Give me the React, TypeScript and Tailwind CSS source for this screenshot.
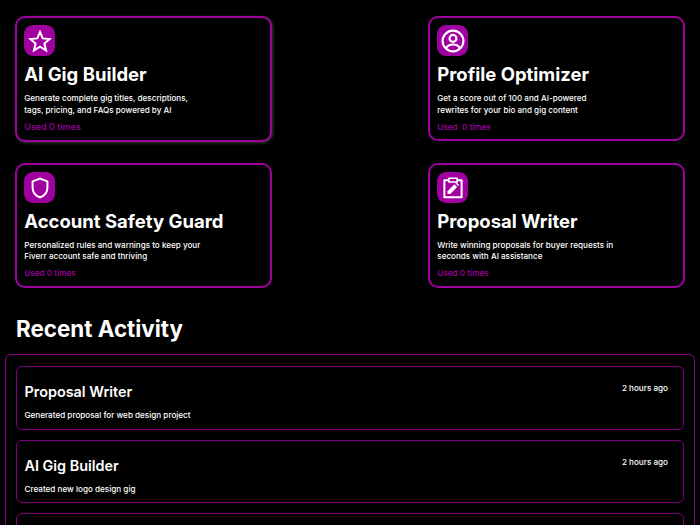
import type { ReactNode } from "react";

type Tool = {
  title: string;
  lines: string[];
  used: string;
  usedClass: string;
  descClass: string;
  icon: ReactNode;
  raised?: boolean;
};

const StarIcon = (
  <svg width="24" height="24" viewBox="0 0 24 24" fill="none" stroke="currentColor" strokeWidth="2" strokeLinejoin="miter">
    <polygon points="12,3 14.7,9.4 21.6,10 16.4,14.5 18,21.3 12,17.7 6,21.3 7.6,14.5 2.4,10 9.3,9.4" />
  </svg>
);

const ProfileIcon = (
  <svg width="26" height="26" viewBox="0 0 24 24" fill="none" stroke="currentColor" strokeWidth="2">
    <circle cx="12" cy="12" r="9.6" />
    <circle cx="12" cy="9.6" r="3.2" />
    <path d="M5.6 18.4c1.4-2.2 3.6-3.2 6.4-3.2s5 1 6.4 3.2" />
  </svg>
);

const ShieldIcon = (
  <svg width="24" height="24" viewBox="0 0 24 24" fill="none" stroke="currentColor" strokeWidth="2" strokeLinejoin="round">
    <path d="M12 2.6 4.6 5.4v6.1c0 4.7 3 8.3 7.4 9.9 4.4-1.6 7.4-5.2 7.4-9.9V5.4z" />
  </svg>
);

const ClipboardIcon = (
  <svg width="22" height="22" viewBox="0 0 24 24" fill="none" stroke="currentColor" strokeWidth="2.2" strokeLinejoin="round">
    <path d="M7.5 3.6H2.6v18.4h18.8V3.6h-4.9" />
    <rect x="7.5" y="1.4" width="9" height="4" strokeWidth="1.8" />
    <path d="M6 18.5v-3l7.5-7.5 3 3-7.5 7.5z" fill="currentColor" stroke="none" />
    <path d="M14.6 6.9l1.1-1.1 3 3-1.1 1.1z" fill="currentColor" stroke="none" />
  </svg>
);

const tools: Tool[] = [
  {
    title: "AI Gig Builder",
    lines: ["Generate complete gig titles, descriptions,", "tags, pricing, and FAQs powered by AI"],
    used: "Used 0 times",
    usedClass: "mt-[4px] text-[9px]",
    descClass: "mt-[3px] leading-[12px]",
    icon: StarIcon,
    raised: true,
  },
  {
    title: "Profile Optimizer",
    lines: ["Get a score out of 100 and AI-powered", "rewrites for your bio and gig content"],
    used: "Used\u00a0 0 times",
    usedClass: "mt-[5px] text-[8.2px]",
    descClass: "mt-[3px] leading-[12px]",
    icon: ProfileIcon,
  },
  {
    title: "Account Safety Guard",
    lines: ["Personalized rules and warnings to keep your", "Fiverr account safe and thriving"],
    used: "Used 0 times",
    usedClass: "mt-[4.5px] text-[8.2px]",
    descClass: "mt-[3.5px] leading-[11.5px]",
    icon: ShieldIcon,
  },
  {
    title: "Proposal Writer",
    lines: ["Write winning proposals for buyer requests in", "seconds with AI assistance"],
    used: "Used 0 times",
    usedClass: "mt-[4.5px] text-[8.2px]",
    descClass: "mt-[3.5px] leading-[11.5px]",
    icon: ClipboardIcon,
  },
];

const activity = [
  { title: "Proposal Writer", detail: "Generated proposal for web design project", time: "2 hours ago" },
  { title: "AI Gig Builder", detail: "Created new logo design gig", time: "2 hours ago" },
];

function ToolCard({ tool }: { tool: Tool }) {
  return (
    <div
      className={
        "rounded-[10px] border-2 border-[#a000a0] bg-black px-[7px] pt-[7px] " +
        (tool.raised ? "h-[126px] shadow-[1px_1px_3px_rgba(120,160,120,0.4)]" : "h-[125px]")
      }
    >
      <div className="flex h-[31px] w-[31px] items-center justify-center rounded-[9px] bg-[#a000a0] text-white">
        {tool.icon}
      </div>
      <h3 className="mt-[3px] text-[18.5px] leading-[30px] font-bold text-white">{tool.title}</h3>
      <p className={"text-[8.1px] font-medium text-white " + tool.descClass}>
        {tool.lines[0]}
        <br />
        {tool.lines[1]}
      </p>
      <p className={"leading-[13px] font-medium text-[#a000a0] " + tool.usedClass}>{tool.used}</p>
    </div>
  );
}

export default function App() {
  return (
    <div className="h-[525px] w-[700px] overflow-hidden bg-black font-['Inter',sans-serif]">
      <div className="grid grid-cols-[257px_257px] items-start gap-x-[156px] gap-y-[21px] pt-[16px] pl-[15.3px]">
        {tools.map((tool) => (
          <ToolCard key={tool.title} tool={tool} />
        ))}
      </div>

      <h2 className="mt-[23px] pl-[16px] text-[22.4px] leading-[36px] font-bold text-white">Recent Activity</h2>

      <div className="mx-[5px] mt-[7px] flex flex-col gap-[10px] rounded-[6px] border border-[#8b008b] px-[10px] pt-[11px] pb-[10px]">
        {activity.map((item) => (
          <div key={item.title} className="flex h-[63.5px] justify-between rounded-[6px] border border-[#800080] pr-[15px] pl-[7.5px]">
            <div>
              <h4 className="mt-[14px] text-[14.4px] leading-[22px] font-semibold text-white">{item.title}</h4>
              <p className="mt-[6px] text-[8.15px] leading-[12px] font-medium text-white">{item.detail}</p>
            </div>
            <span className="mt-[15px] text-[8.15px] leading-[12px] font-medium text-white">{item.time}</span>
          </div>
        ))}
        <div className="h-[63.5px] rounded-[6px] border border-[#800080]" />
      </div>
    </div>
  );
}
